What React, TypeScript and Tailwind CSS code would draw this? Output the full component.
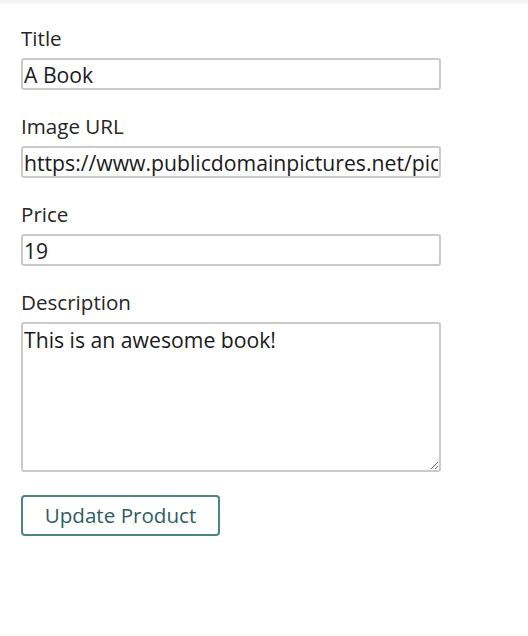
import { useState } from 'react'

const font = { fontFamily: '"Open Sans", "Noto Sans", sans-serif' }

function Field({
  label,
  value,
  onChange,
}: {
  label: string
  value: string
  onChange: (v: string) => void
}) {
  return (
    <div className="mb-[22px] flex flex-col">
      <label className="text-[20.6px] leading-[28px] text-[#262626]">{label}</label>
      <input
        type="text"
        value={value}
        onChange={(e) => onChange(e.target.value)}
        className="mt-[6px] h-[32px] w-[420px] rounded-[3px] border-2 border-[#cacaca] bg-white px-[1px] text-[21.2px] text-[#1a1a1a] outline-none"
      />
    </div>
  )
}

export default function App() {
  const [title, setTitle] = useState('A Book')
  const [imageUrl, setImageUrl] = useState('https://www.publicdomainpictures.net/pictures/book.jpg')
  const [price, setPrice] = useState('19')
  const [description, setDescription] = useState('This is an awesome book!')

  return (
    <div className="min-h-[636px] w-[528px] bg-white" style={font}>
      <div className="h-[3px] bg-[#f4f4f4]" />
      <form className="px-[21px] pt-[21px]" onSubmit={(e) => e.preventDefault()}>
        <Field label="Title" value={title} onChange={setTitle} />
        <Field label="Image URL" value={imageUrl} onChange={setImageUrl} />
        <Field label="Price" value={price} onChange={setPrice} />
        <div className="flex flex-col">
          <label className="text-[20.6px] leading-[28px] text-[#262626]">Description</label>
          <textarea
            value={description}
            onChange={(e) => setDescription(e.target.value)}
            className="mt-[6px] h-[150px] w-[420px] rounded-[3px] border-2 border-[#cacaca] bg-white px-[1px] pt-[2px] text-[21.2px] leading-[28px] text-[#1a1a1a] outline-none"
          />
        </div>
        <button
          type="submit"
          className="mt-[23px] h-[41px] w-[199px] rounded-[4px] border-2 border-[#4d8582] bg-white text-[20.6px] text-[#2d5e5c]"
        >
          Update Product
        </button>
      </form>
    </div>
  )
}
